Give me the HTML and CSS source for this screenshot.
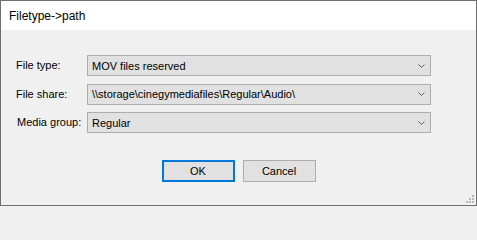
FILE: index.html
```html
<!DOCTYPE html>
<html>
<head>
<meta charset="utf-8">
<link rel="stylesheet" href="styles.css">
</head>
<body>
<div class="window">
  <div class="titlebar">Filetype-&gt;path</div>
  <div class="content">
    <div class="form">
      <label class="label">File type:</label>
      <div class="combo"><span class="value">MOV files reserved</span><svg class="chev" width="7" height="4" viewBox="0 0 7 4"><polyline points="0.5,0.5 3.5,3.5 6.5,0.5" fill="none" stroke="#606060" stroke-width="1"/></svg></div>
      <label class="label">File share:</label>
      <div class="combo"><span class="value">\\storage\cinegymediafiles\Regular\Audio\</span><svg class="chev" width="7" height="4" viewBox="0 0 7 4"><polyline points="0.5,0.5 3.5,3.5 6.5,0.5" fill="none" stroke="#606060" stroke-width="1"/></svg></div>
      <label class="label label-media">Media group:</label>
      <div class="combo"><span class="value">Regular</span><svg class="chev" width="7" height="4" viewBox="0 0 7 4"><polyline points="0.5,0.5 3.5,3.5 6.5,0.5" fill="none" stroke="#606060" stroke-width="1"/></svg></div>
    </div>
    <div class="buttons">
      <button class="btn btn-default">OK</button>
      <button class="btn">Cancel</button>
    </div>
    <div class="grip">
      <span class="dot d1"></span>
      <span class="dot d2"></span><span class="dot d3"></span>
      <span class="dot d4"></span><span class="dot d5"></span><span class="dot d6"></span>
    </div>
  </div>
</div>
</body>
</html>
```
FILE: styles.css
```css
html, body {
  margin: 0;
  padding: 0;
  background: #f0f0f0;
}
.window {
  width: 477px;
  height: 206px;
  box-sizing: border-box;
  border: 1px solid #6e6e6e;
  display: flex;
  flex-direction: column;
  font-family: "Liberation Sans", Arial, sans-serif;
  font-size: 11px;
  color: #000;
}
.titlebar {
  height: 29px;
  background: #fff;
  font-size: 12px;
  line-height: 31px;
  padding-left: 8px;
  color: #000;
}
.content {
  flex: 1;
  background: #f0f0f0;
  position: relative;
  padding: 25px 0 0 15px;
}
.form {
  display: grid;
  grid-template-columns: 71px 344px;
  grid-auto-rows: 21px;
  row-gap: 7.5px;
  align-items: center;
}
.label {
  line-height: 21px;
}
.label-media {
  padding-left: 1px;
}
.combo {
  height: 21px;
  box-sizing: border-box;
  border: 1px solid #adadad;
  background: #e1e1e1;
  display: flex;
  align-items: center;
  justify-content: space-between;
  padding: 0 5px 0 4px;
}
.value {
  white-space: nowrap;
}
.chev {
  display: block;
  margin-right: 0;
}
.buttons {
  display: flex;
  justify-content: center;
  gap: 8px;
  margin-top: 27px;
  margin-left: -15px;
}
.btn {
  width: 73px;
  height: 22px;
  box-sizing: border-box;
  border: 1px solid #adadad;
  background: #e1e1e1;
  font-family: "Liberation Sans", Arial, sans-serif;
  font-size: 11px;
  color: #000;
  padding: 0;
  margin: 0;
}
.btn-default {
  border: 2px solid #0078d7;
}
.grip {
  position: absolute;
  right: 2px;
  bottom: 2px;
  width: 8px;
  height: 8px;
}
.dot {
  position: absolute;
  width: 2px;
  height: 2px;
  background: #b8b8b8;
}
.d1 { left: 6px; top: 0; }
.d2 { left: 3px; top: 3px; }
.d3 { left: 6px; top: 3px; }
.d4 { left: 0; top: 6px; }
.d5 { left: 3px; top: 6px; }
.d6 { left: 6px; top: 6px; }
```
